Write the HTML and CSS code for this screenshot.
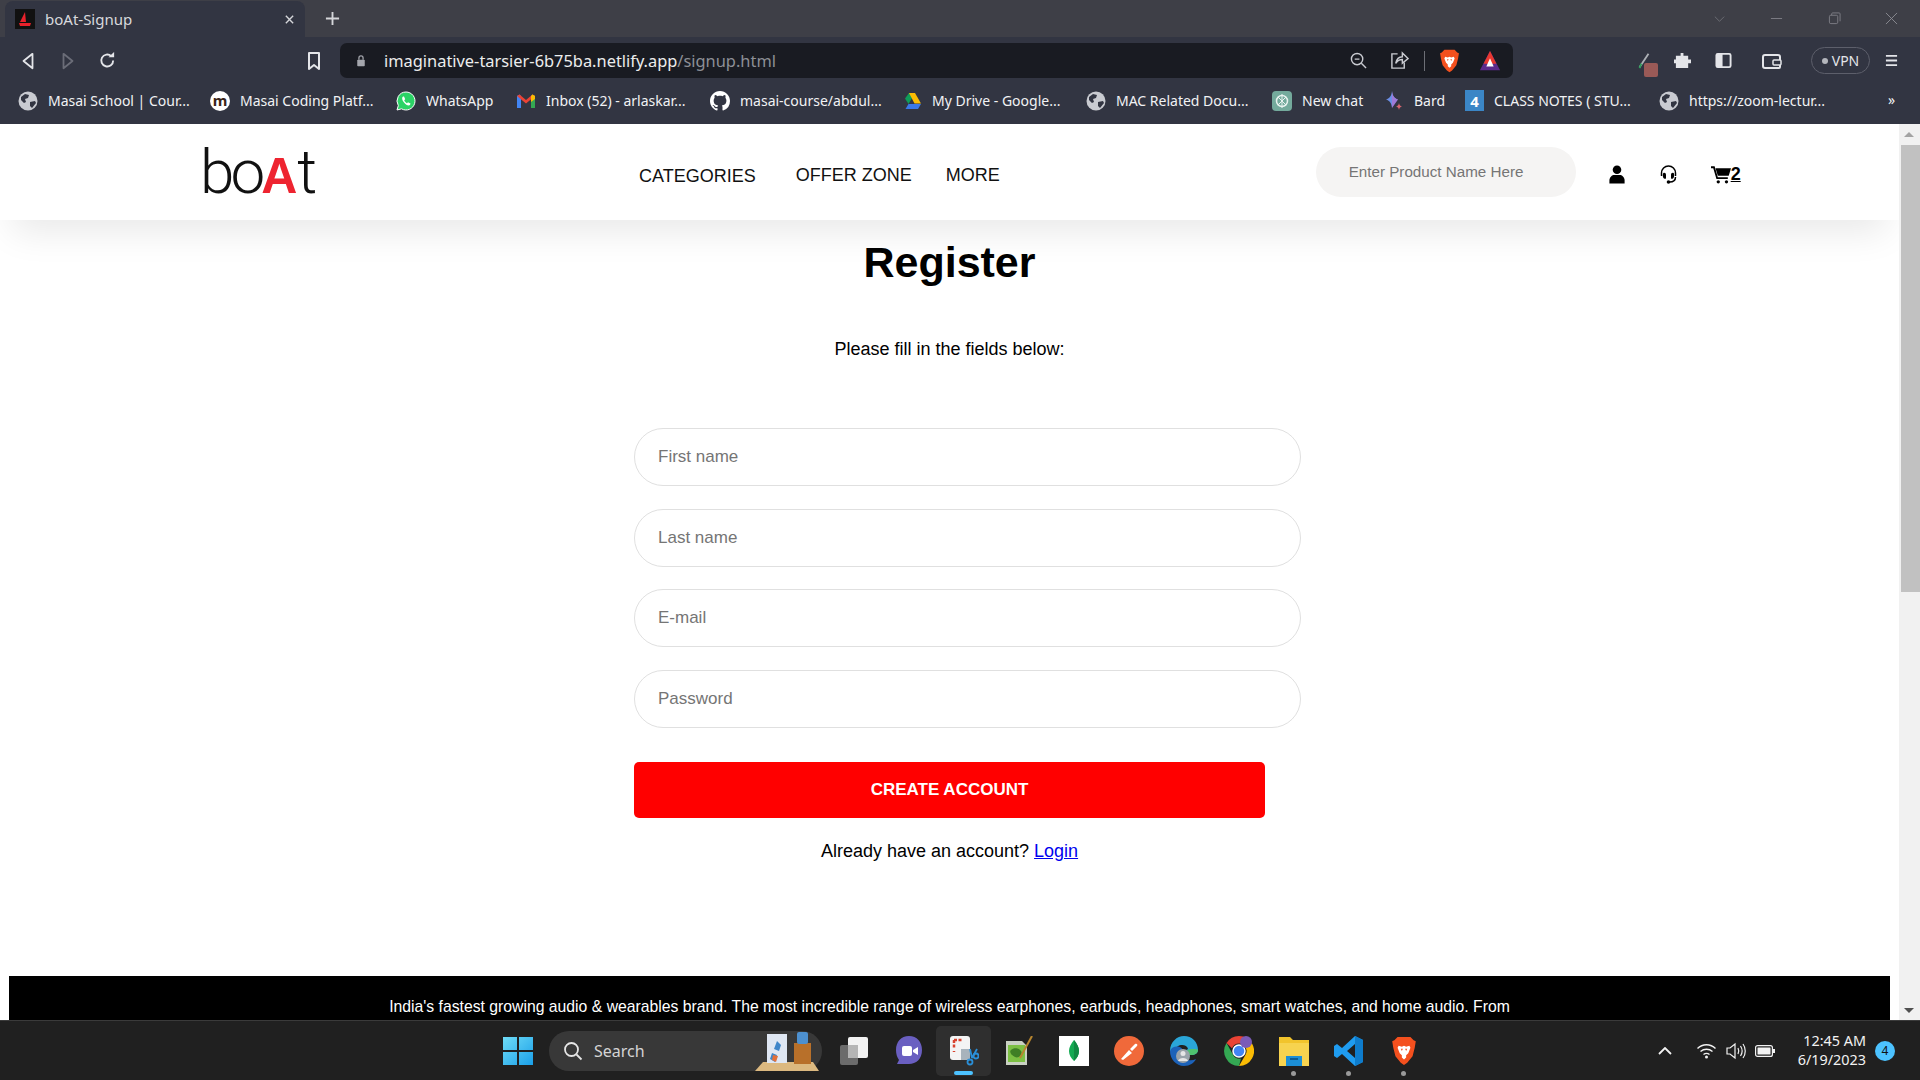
FILE: index.html
```html
<!DOCTYPE html>
<html lang="en">
<head>
  <meta charset="UTF-8">
  <meta name="viewport" content="width=device-width, initial-scale=1.0">
  <title>boAt-Signup</title>
  <link rel="stylesheet" href="styles.css">
</head>
<body>
  <svg class="sprites" width="0" height="0">
    <symbol id="globe" viewBox="0 0 20 20">
      <circle cx="10" cy="10" r="9.5" fill="#c9cbd1"/>
      <path d="M3 6l4-3 4 1-1 3-3 1 1 3-2 1-3-3zM12 11l5-1 1 2-4 5-2-2z" fill="#323542"/>
    </symbol>
    <symbol id="brave" viewBox="0 0 24 28">
      <path d="M6 1h12l3 3 2 1-1 6-2 8-5 6-3 2-3-2-5-6-2-8-1-6 2-1z" fill="#f4501e"/>
      <path d="M7 9l3 1 2-1 2 1 3-1 1 2-2 5-2 2v2l-2 2-2-2v-2l-2-2-2-5z" fill="#fff"/>
      <path d="M9 12h2l-1 2zM13 12h2l-1 2z" fill="#f4501e"/>
    </symbol>
  </svg>

  <!-- browser chrome -->
  <div class="tab-strip">
    <div class="tab">
      <svg class="tab-icon" viewBox="0 0 20 20"><rect width="20" height="20" fill="#111"/><path d="M10 3v10H5z" fill="#e8222b"/><path d="M10 3l1 10h-1z" fill="#e8222b"/><path d="M4 14h12l-1 3H5z" fill="#e8222b"/></svg>
      <span class="tab-title">boAt-Signup</span>
      <svg class="tab-close" viewBox="0 0 12 12"><path d="M2 2l8 8M10 2l-8 8" stroke="#d5d6da" stroke-width="1.5"/></svg>
    </div>
    <svg class="new-tab" viewBox="0 0 16 16"><path d="M8 1v14M1 8h14" stroke="#d5d6da" stroke-width="2"/></svg>
    <div class="win-controls">
      <svg viewBox="0 0 14 14"><path d="M2 5l5 5 5-5" fill="none" stroke="#6d6e76" stroke-width="1"/></svg>
      <svg viewBox="0 0 14 14"><path d="M1 7h12" stroke="#7f8087" stroke-width="1"/></svg>
      <svg viewBox="0 0 14 14"><rect x="1.5" y="3.5" width="9" height="9" rx="1.5" fill="none" stroke="#7f8087"/><path d="M4 3.5V2a1 1 0 011-1h7a1 1 0 011 1v8" fill="none" stroke="#7f8087"/></svg>
      <svg viewBox="0 0 14 14"><path d="M1 1l12 12M13 1L1 13" stroke="#8b8c93" stroke-width="1"/></svg>
    </div>
  </div>

  <div class="toolbar">
    <svg class="tool tool-back" viewBox="0 0 14 20"><path d="M12 2L2 10l10 8z" fill="none" stroke="#e4e5e9" stroke-width="2" stroke-linejoin="round"/></svg>
    <svg class="tool tool-forward" viewBox="0 0 14 20"><path d="M2 2l10 8-10 8z" fill="none" stroke="#6b6d78" stroke-width="2" stroke-linejoin="round"/></svg>
    <svg class="tool tool-reload" viewBox="0 0 18 18"><path d="M15 9a6.3 6.3 0 11-2-4.6" fill="none" stroke="#e4e5e9" stroke-width="2"/><path d="M10 5.500h6V0z" fill="#e4e5e9"/></svg>
    <svg class="tool tool-bookmark" viewBox="0 0 14 18"><path d="M2 1h10v16l-5-4-5 4z" fill="none" stroke="#e4e5e9" stroke-width="2" stroke-linejoin="round"/></svg>
    <div class="url-bar">
      <svg class="url-lock" viewBox="0 0 12 14"><path d="M3.500 6V4a2.500 2.500 0 015 0v2" fill="none" stroke="#a4a6ad" stroke-width="1.500"/><rect x="1.500" y="6" width="9" height="8" rx="1" fill="#a4a6ad"/></svg>
      <span class="url-text">imaginative-tarsier-6b75ba.netlify.app<span class="url-path">/signup.html</span></span>
      <svg class="url-zoom" viewBox="0 0 18 18"><circle cx="7.500" cy="7.500" r="6" fill="none" stroke="#c9cbd1" stroke-width="1.500"/><path d="M5 7.500h5M12 12l5 5" stroke="#c9cbd1" stroke-width="1.500"/></svg>
      <svg class="url-share" viewBox="0 0 20 20"><path d="M8 3H2v15h13v-6" fill="none" stroke="#c9cbd1" stroke-width="1.500"/><path d="M6 13c1-5 4-7 7-7V2l6 6-6 5V9c-3 0-5 1-7 4z" fill="none" stroke="#c9cbd1" stroke-width="1.500"/></svg>
      <span class="url-divider"></span>
      <svg class="url-brave"><use href="#brave"/></svg>
      <svg class="url-rewards" viewBox="0 0 24 24"><path d="M12 1l11 21H1z" fill="#5b2a8c"/><path d="M12 1l7 14H5z" fill="#e9382f"/><path d="M12 9l4 9H8z" fill="#fff"/></svg>
    </div>
    <svg class="tool tool-pen" viewBox="0 0 14 20"><path d="M12 2L2 17" stroke="#aeb1b6" stroke-width="2"/><path d="M4 13l-2 5" stroke="#2f9e5b" stroke-width="2"/></svg>
    <span class="pen-badge"></span>
    <svg class="tool tool-puzzle" viewBox="0 0 18 18"><path d="M7 1h3v3h5v4h3v4h-3v5H2v-5H0V8h2V4h5z" fill="#e4e5e9"/></svg>
    <svg class="tool tool-sidebar" viewBox="0 0 18 18"><rect x="1.500" y="2" width="15" height="14" rx="1.500" fill="none" stroke="#e4e5e9" stroke-width="2"/><rect x="2" y="2" width="6" height="14" fill="#e4e5e9"/></svg>
    <svg class="tool tool-wallet" viewBox="0 0 20 18"><path d="M3 3h13a2 2 0 012 2v10a1 1 0 01-1 1H3a2 2 0 01-2-2V5a2 2 0 012-2z" fill="none" stroke="#e4e5e9" stroke-width="2"/><rect x="11" y="8" width="8" height="5" rx="1" fill="#323542" stroke="#e4e5e9" stroke-width="1.500"/></svg>
    <div class="vpn-pill"><span class="vpn-dot"></span>VPN</div>
    <svg class="tool tool-menu" viewBox="0 0 14 14"><path d="M1 2h12M1 7h12M1 12h12" stroke="#e4e5e9" stroke-width="2"/></svg>
  </div>

  <div class="bookmarks">
    <div class="mark"><svg class="mark-icon"><use href="#globe"/></svg><span>Masai School | Cour...</span></div>
    <div class="mark"><span class="masai-icon">m</span><span>Masai Coding Platf...</span></div>
    <div class="mark">
      <svg class="mark-icon" viewBox="0 0 20 20"><path d="M10 1a9 9 0 00-7.700 13.600L1 19l4.500-1.200A9 9 0 1010 1z" fill="#2bd366" stroke="#fff" stroke-width="1"/><path d="M7 5.500c-1.500 1-1 3.500 1 6s4.500 3.500 6 2.500l.5-1.500-2.500-1.200-1 1c-1.200-.5-2.300-1.800-2.800-3l1-1L8 5.500z" fill="#fff"/></svg>
      <span>WhatsApp</span>
    </div>
    <div class="mark">
      <svg class="mark-icon" viewBox="0 0 20 20"><path d="M1 17V5l2.500-1.500L5 5v12z" fill="#4285f4"/><path d="M15 17V5l1.500-1.500L19 5v12z" fill="#34a853"/><path d="M1 5l2.500-1.500L10 9l6.500-5.500L19 5l-9 7.500z" fill="#ea4335"/><path d="M15 5l1.500-1.500L19 5v3l-4 3z" fill="#fbbc04"/></svg>
      <span>Inbox (52) - arlaskar...</span>
    </div>
    <div class="mark">
      <svg class="mark-icon" viewBox="0 0 16 16"><path fill="#fff" d="M8 0C3.580 0 0 3.580 0 8c0 3.540 2.290 6.530 5.470 7.590.4.070.55-.17.55-.38 0-.19-.01-.82-.01-1.490-2.010.37-2.530-.49-2.690-.94-.09-.23-.48-.94-.82-1.130-.28-.15-.68-.52-.01-.53.63-.01 1.080.58 1.230.82.72 1.210 1.870.87 2.330.66.07-.52.28-.87.51-1.070-1.780-.2-3.640-.89-3.640-3.950 0-.87.31-1.590.82-2.150-.08-.2-.36-1.020.08-2.120 0 0 .67-.21 2.200.82.64-.18 1.320-.27 2-.27.68 0 1.360.09 2 .27 1.530-1.040 2.200-.82 2.200-.82.44 1.100.16 1.920.08 2.120.51.56.82 1.270.82 2.150 0 3.070-1.870 3.750-3.650 3.950.29.25.54.73.54 1.480 0 1.070-.01 1.930-.01 2.200 0 .21.15.46.55.38A8.013 8.013 0 0016 8c0-4.420-3.580-8-8-8z"/></svg>
      <span>masai-course/abdul...</span>
    </div>
    <div class="mark">
      <svg class="mark-icon" viewBox="0 0 20 20"><path d="M7 2h6l-6.500 11-3.500-5.500z" fill="#0f9d58"/><path d="M13 2l6 10.500h-6.500L7 2z" fill="#fbbc04"/><path d="M6.500 13H19l-3 5H3.500z" fill="#3b78e7"/></svg>
      <span>My Drive - Google...</span>
    </div>
    <div class="mark"><svg class="mark-icon"><use href="#globe"/></svg><span>MAC Related Docu...</span></div>
    <div class="mark">
      <svg class="mark-icon" viewBox="0 0 20 20"><rect width="20" height="20" rx="4" fill="#74aa9c"/><circle cx="10" cy="10" r="5.500" fill="none" stroke="#e8f2ef" stroke-width="1.500"/><path d="M6 6l8 8M14 6l-8 8M10 3v14" stroke="#e8f2ef" stroke-width="1"/></svg>
      <span>New chat</span>
    </div>
    <div class="mark">
      <svg class="mark-icon" viewBox="0 0 20 20"><path d="M8 0c.6 5 2 7 6 8.500-4 1.500-5.400 3.500-6 8.500-.6-5-2-7-6-8.500C6 7 7.400 5 8 0z" fill="#6c8fe6"/><path d="M8 0c.6 5 2 7 6 8.500L8 17z" fill="#9f7ad8"/><path d="M15 12c.3 2 1 3 3 3.500-2 .5-2.700 1.500-3 3.500-.3-2-1-3-3-3.500 2-.5 2.700-1.500 3-3.500z" fill="#d96570"/></svg>
      <span>Bard</span>
    </div>
    <div class="mark"><span class="notes-icon">4</span><span>CLASS NOTES ( STU...</span></div>
    <div class="mark"><svg class="mark-icon"><use href="#globe"/></svg><span>https://zoom-lectur...</span></div>
    <div class="mark-more">»</div>
  </div>

  <!-- the page itself -->
  <div class="viewport">
    <div class="page">
      <header class="site-header">
        <div class="logo"><span class="logo-bo">bo</span><span class="logo-a">A</span><span>t</span></div>
        <nav class="site-nav">
          <a class="nav-categories">CATEGORIES</a>
          <a>OFFER ZONE</a>
          <a>MORE</a>
        </nav>
        <input class="search-box" type="text" placeholder="Enter Product Name Here">
        <svg class="icon-user" viewBox="0 0 16 20"><circle cx="8" cy="5" r="4.500"/><path d="M0 19.500v-3c0-4 3-6 5-6h6c2 0 5 2 5 6v3z"/></svg>
        <svg class="icon-headset" viewBox="0 0 18 20"><path d="M2 12V9a7 7 0 0114 0v3" fill="none" stroke="#000" stroke-width="1.500"/><path d="M4 9c1.500-.5 2.500.5 2.500 2v3c0 1-1 1-2 .5-1.500-1-1.500-5-.5-5.500zM14 9c-1.500-.5-2.500.5-2.500 2v3c0 1 1 1 2 .5 1.500-1 1.500-5 .5-5.500z"/><path d="M16 13c0 3-2 5-6 5" fill="none" stroke="#000" stroke-width="1.500"/><circle cx="9" cy="18" r="1.800"/></svg>
        <a class="cart-link">
          <svg class="icon-cart" viewBox="0 0 22 20"><path d="M0 1h4l3.500 12h11v2H6L2.500 3H0z"/><path d="M5 3h17l-2.500 8.500H7.500z"/><circle cx="8" cy="18" r="1.800"/><circle cx="17" cy="18" r="1.800"/></svg><span class="cart-count">2</span>
        </a>
      </header>

      <main class="register">
        <h1>Register</h1>
        <p class="register-hint">Please fill in the fields below:</p>
        <form class="register-form">
          <input type="text" placeholder="First name">
          <input type="text" placeholder="Last name">
          <input type="email" placeholder="E-mail">
          <input type="password" placeholder="Password">
          <button type="button">CREATE ACCOUNT</button>
        </form>
        <p class="register-login">Already have an account? <a href="#">Login</a></p>
      </main>

      <footer class="site-footer">
        <p>India's fastest growing audio &amp; wearables brand. The most incredible range of wireless earphones, earbuds, headphones, smart watches, and home audio. From</p>
      </footer>
    </div>
    <div class="scrollbar">
      <span class="scroll-up"></span>
      <span class="scroll-thumb"></span>
      <span class="scroll-down"></span>
    </div>
  </div>

  <!-- windows taskbar -->
  <div class="taskbar">
    <svg class="win-logo" viewBox="0 0 30 30">
      <defs><linearGradient id="winBlue" x1="0" y1="0" x2="1" y2="1"><stop offset="0" stop-color="#6fdcf7"/><stop offset="1" stop-color="#1a9fe8"/></linearGradient></defs>
      <path d="M0 1h14v13H0zM16 1h14v13H16zM0 16h14v13H0zM16 16h14v13H16z" fill="url(#winBlue)"/>
    </svg>
    <div class="task-search">
      <svg class="task-search-icon" viewBox="0 0 20 20"><circle cx="8.500" cy="8.500" r="6.500" fill="none" stroke="#e6e6e6" stroke-width="1.800"/><path d="M13.500 13.500l5 5" stroke="#e6e6e6" stroke-width="1.800"/></svg>
      <span>Search</span>
      <svg class="task-search-art" viewBox="0 0 64 40">
        <path d="M0 40l8-9h50l6 9z" fill="#dcb980"/>
        <rect x="12" y="3" width="20" height="29" fill="#dfe7f3"/>
        <path d="M22 10l4 4-2 6-5-2zM17 22l5 2-2 7-5-3z" fill="#3f86c9"/>
        <path d="M18 24l5 1-2 6-4-2z" fill="#e2703a"/>
        <rect x="39" y="12" width="17" height="21" fill="#b8702a"/>
        <rect x="42" y="1" width="11" height="12" rx="2" fill="#4d90cf"/>
      </svg>
    </div>
    <div class="task-apps">
      <div class="app">
        <svg viewBox="0 0 30 30"><rect x="1" y="9" width="18" height="20" rx="2" fill="#6b6b6b"/><rect x="9" y="1" width="20" height="21" rx="2" fill="#f2f2f2"/><rect x="9" y="9" width="10" height="13" fill="#b5b5b5"/></svg>
      </div>
      <div class="app">
        <svg viewBox="0 0 30 30"><path d="M15 0c8 0 13 6 13 14 0 9-6 14-13 14H3l2-4C3 21 2 18 2 14 2 6 7 0 15 0z" fill="#6a5fc1"/><rect x="8" y="10" width="10" height="10" rx="2" fill="#fff"/><path d="M19 14l5-3v8l-5-3z" fill="#fff"/></svg>
      </div>
      <div class="app app-active">
        <svg viewBox="0 0 30 30"><rect x="1" y="0" width="20" height="24" rx="3" fill="#f4f4f4"/><path d="M5 4h8M5 4v8M5 15v1" stroke="#d9432f" stroke-width="2.500" stroke-dasharray="3 1.500"/><rect x="12" y="13" width="9" height="11" fill="#a8b3bc"/><path d="M21 13l2 9M28 13l-5 9" stroke="#2a8fd8" stroke-width="1.800"/><circle cx="21" cy="26" r="2.500" fill="none" stroke="#2a8fd8" stroke-width="1.800"/><circle cx="27" cy="20" r="2.500" fill="none" stroke="#2a8fd8" stroke-width="1.800"/></svg>
      </div>
      <div class="app">
        <svg viewBox="0 0 30 30"><path d="M2 5h16l5 5v19H2z" fill="#c9d0c2"/><rect x="4" y="9" width="17" height="17" fill="#7cc043"/><path d="M7 14c3-3 8-2 10 1s-2 8-6 6-6-5-4-7z" fill="#3f7f25"/><path d="M28 0L16 22" stroke="#b8862f" stroke-width="2"/></svg>
      </div>
      <div class="app">
        <svg viewBox="0 0 30 30"><rect width="30" height="30" fill="#fff"/><path d="M15 4c3 4 5 7 5 11s-2 7-5 10c-3-3-5-6-5-10s2-7 5-11z" fill="#13aa52"/><path d="M15 4c3 4 5 7 5 11s-2 7-5 10z" fill="#0f8a43"/></svg>
      </div>
      <div class="app">
        <svg viewBox="0 0 30 30"><circle cx="15" cy="15" r="15" fill="#f0693a"/><path d="M7 23l8-9 3 3-9 7zM16 13l5-5c2-1 3 1 2 2l-5 5z" fill="#fff"/></svg>
      </div>
      <div class="app">
        <svg viewBox="0 0 30 30"><path d="M1 15C1 6 8 0 15 0c8 0 14 6 14 14 0 3-3 5-7 5h-7c0-4 2-5 4-6-1-5-11-6-14 2z" fill="#2aa6d8"/><path d="M29 14c0 3-3 5-7 5h-5c-1-3 2-6 5-6 4 0 7 0 7 1z" fill="#4fc26f"/><path d="M1 15c0 8 6 15 14 15 6 0 10-3 12-7-6 3-13 1-13-7C14 9 3 9 1 15z" fill="#1c62b9"/><circle cx="14" cy="20" r="7" fill="#9aa3aa"/><circle cx="14" cy="17.500" r="2.500" fill="#e6e6e6"/><path d="M9 25c1-4 9-4 10 0z" fill="#e6e6e6"/></svg>
      </div>
      <div class="app">
        <svg viewBox="0 0 30 30"><path d="M15 0a15 15 0 0113 7.500H15a7.500 7.500 0 00-7 4.800L2.500 7A15 15 0 0115 0z" fill="#ea4335"/><path d="M28 7.500A15 15 0 0115 30l6.500-11.300A7.500 7.500 0 0020 9.500z" fill="#fbbc04"/><path d="M15 30A15 15 0 012.500 7L9 18.700a7.500 7.500 0 008 3.900z" fill="#34a853"/><circle cx="15" cy="15" r="6" fill="#4285f4" stroke="#fff" stroke-width="1.500"/><circle cx="22" cy="6" r="6" fill="#7a5bb8"/></svg>
      </div>
      <div class="app app-open">
        <svg viewBox="0 0 30 30"><path d="M0 1h11l3 3h16v26H0z" fill="#f2c42c"/><path d="M0 7h30v23H0z" fill="#f7d34f"/><rect x="7" y="20" width="16" height="10" fill="#1c8fd6"/><rect x="11" y="22" width="8" height="2" fill="#0c5c94"/></svg>
      </div>
      <div class="app app-open">
        <svg viewBox="0 0 30 30"><path d="M21 0l8 4v22l-8 4-13-12-5 4-3-2v-10l3-2 5 4zM21 8l-8 7 8 7z" fill="#1f9cf0"/><path d="M21 0l8 4v22l-8 4z" fill="#0e7ccc"/></svg>
      </div>
      <div class="app app-open">
        <svg viewBox="0 0 24 28"><use href="#brave"/></svg>
      </div>
    </div>
    <div class="tray">
      <svg class="tray-chevron" viewBox="0 0 14 8"><path d="M1 7l6-6 6 6" fill="none" stroke="#f2f2f2" stroke-width="1.800"/></svg>
      <svg class="tray-wifi" viewBox="0 0 20 16"><path d="M1 5.500c5-5 13-5 18 0M4 8.500c3.500-3 8.500-3 12 0M7 11.500c2-1.500 4-1.500 6 0" fill="none" stroke="#f2f2f2" stroke-width="1.400"/><circle cx="10" cy="14" r="1.500" fill="#f2f2f2"/></svg>
      <svg class="tray-sound" viewBox="0 0 20 18"><path d="M1 6h3l5-4v14l-5-4H1z" fill="none" stroke="#f2f2f2" stroke-width="1.200"/><path d="M12 6c1 2 1 4 0 6M14.500 4c2 3 2 7 0 10M17 2c3 4 3 10 0 14" fill="none" stroke="#f2f2f2" stroke-width="1.200"/></svg>
      <svg class="tray-battery" viewBox="0 0 20 12"><rect x=".6" y=".6" width="16.800" height="10.800" rx="2" fill="none" stroke="#f2f2f2" stroke-width="1.200"/><rect x="2.500" y="2.500" width="13" height="7" rx=".5" fill="#f2f2f2"/><rect x="18" y="4" width="2" height="4" fill="#f2f2f2"/></svg>
      <div class="tray-clock"><span>12:45 AM</span><span>6/19/2023</span></div>
      <span class="tray-badge">4</span>
    </div>
  </div>
</body>
</html>
```

FILE: styles.css
```css
* {
  box-sizing: border-box;
}

html, body {
  height: 100%;
}

body {
  margin: 0;
  display: flex;
  flex-direction: column;
  overflow: hidden;
  font-family: 'Liberation Sans', Arial, sans-serif;
  background: #fff;
}

.sprites {
  position: absolute;
}

svg {
  display: block;
  flex-shrink: 0;
}

/* browser chrome */
.tab-strip {
  height: 37px;
  display: flex;
  align-items: flex-end;
  padding-left: 5px;
  background: #3e3f47;
  font-family: 'Noto Sans', sans-serif;
}

.tab {
  width: 300px;
  height: 36px;
  display: flex;
  align-items: center;
  padding: 0 10px;
  background: #323542;
  border-radius: 8px 8px 0 0;
}

.tab-icon {
  width: 20px;
  height: 20px;
}

.tab-title {
  margin-left: 10px;
  font-size: 15px;
  color: #d8d9dd;
}

.tab-close {
  width: 11px;
  height: 11px;
  margin-left: auto;
}

.new-tab {
  width: 15px;
  height: 15px;
  margin: 0 0 11px 20px;
}

.win-controls {
  margin-left: auto;
  align-self: center;
  display: flex;
  gap: 44.5px;
  padding-right: 22px;
}

.win-controls svg {
  width: 13px;
  height: 13px;
}

.toolbar {
  height: 47px;
  display: flex;
  align-items: center;
  background: #323542;
  font-family: 'Noto Sans', sans-serif;
}

.tool {
  height: 18px;
  width: 14px;
}

.tool-back { margin-left: 21px; }
.tool-forward { margin-left: 26px; }
.tool-reload { margin-left: 24px; width: 17px; height: 17px; }
.tool-bookmark { margin-left: 191px; }

.url-bar {
  width: 1173px;
  height: 35px;
  margin-left: 19px;
  display: flex;
  align-items: center;
  padding-left: 16px;
  background: #191b22;
  border-radius: 7px;
}

.url-lock {
  width: 10px;
  height: 13px;
}

.url-text {
  margin-left: 18px;
  font-size: 16.4px;
  color: #eceded;
  white-space: nowrap;
}

.url-path {
  color: #8d8f96;
}

.url-zoom { width: 17px; height: 17px; margin-left: auto; }
.url-share { width: 19px; height: 19px; margin-left: 23px; }
.url-divider { width: 1px; height: 20px; margin-left: 15px; background: #6d6f76; }
.url-brave { width: 21px; height: 24px; margin-left: 14px; }
.url-rewards { width: 22px; height: 22px; margin: 0 12px 0 19px; }

.tool-pen { margin-left: 124px; }

.pen-badge {
  width: 14px;
  height: 14px;
  margin: 19px 0 0 -7px;
  background: #9a5a57;
  border-radius: 2px;
}

.tool-puzzle { width: 17px; height: 17px; margin-left: 16px; }
.tool-sidebar { width: 17px; height: 17px; margin-left: 24px; }
.tool-wallet { width: 20px; height: 18px; margin-left: 30px; }

.vpn-pill {
  width: 59px;
  height: 27px;
  margin-left: 29px;
  display: flex;
  align-items: center;
  justify-content: center;
  gap: 4px;
  border: 1.500px solid #5d5f6b;
  border-radius: 14px;
  font-size: 14px;
  color: #e4e5e9;
}

.vpn-dot {
  width: 6px;
  height: 6px;
  border-radius: 50%;
  background: #b4b6bc;
}

.tool-menu { width: 13px; height: 13px; margin-left: 15px; }

.bookmarks {
  height: 40px;
  display: grid;
  grid-template-columns: 192px 186px 120px 194px 192px 184px 186px 112px 81px 194px 229px 10px;
  align-items: center;
  padding: 0 0 7px 18px;
  background: #323542;
  font-family: 'Noto Sans', sans-serif;
  font-size: 14px;
  color: #f1f2f4;
}

.mark {
  display: flex;
  align-items: center;
  gap: 10px;
  white-space: nowrap;
}

.mark-icon {
  width: 20px;
  height: 20px;
}

.masai-icon {
  width: 20px;
  height: 20px;
  display: flex;
  align-items: center;
  justify-content: center;
  border-radius: 50%;
  background: #fff;
  color: #3a2418;
  font-weight: 700;
  font-size: 15px;
  line-height: 1;
}

.notes-icon {
  width: 19px;
  height: 21px;
  display: flex;
  align-items: center;
  justify-content: center;
  background: #3b86c6;
  color: #fff;
  font-weight: 700;
  font-size: 15px;
}

.mark-more {
  font-size: 14px;
  margin-top: -2px;
}

/* page */
.viewport {
  flex: 1;
  min-height: 0;
  display: flex;
}

.page {
  width: 1899px;
  padding: 0 9px;
  overflow: hidden;
}

.site-header {
  height: 96px;
  margin: 0 -9px;
  display: flex;
  align-items: center;
  padding-left: 200px;
  background: #fff;
  box-shadow: 0 24px 36px -12px rgba(0, 0, 0, 0.09);
  position: relative;
}

.logo {
  width: 117px;
  height: 62px;
  display: flex;
  align-items: baseline;
  font-family: Roboto, sans-serif;
  font-weight: 300;
  font-size: 62px;
  line-height: 62px;
  color: #111;
}

.logo-bo {
  letter-spacing: -4px;
}

.logo-a {
  font-family: 'Liberation Sans', sans-serif;
  font-weight: 700;
  font-size: 50px;
  color: #ee2430;
}

.site-nav {
  margin-left: 322px;
  display: flex;
  align-items: center;
  font-size: 18px;
  color: #111;
  margin-top: 7px;
}

.site-nav a:nth-child(2) { margin-left: 40px; }
.site-nav a:nth-child(3) { margin-left: 34px; }

.nav-categories {
  padding-top: 1px;
}

.search-box {
  width: 260px;
  height: 50px;
  margin-left: 316px;
  padding: 0 20px 2px 33px;
  border: none;
  border-radius: 25px;
  background: #f5f4f3;
  font-family: inherit;
  font-size: 15.2px;
}

.icon-user {
  width: 16px;
  height: 19px;
  margin: 4px 0 0 33px;
}

.icon-headset {
  width: 19px;
  height: 20px;
  margin: 4px 0 0 34px;
}

.cart-link {
  display: flex;
  align-items: center;
  margin: 4px 0 0 33px;
  color: #000;
}

.icon-cart {
  width: 20px;
  height: 19px;
}

.cart-count {
  font-size: 18px;
  font-weight: 700;
  text-decoration: underline;
}

.register {
  width: 631px;
  margin: 0 auto;
  text-align: center;
}

.register h1 {
  margin: 0;
  padding-top: 17px;
  font-size: 43px;
  line-height: 50px;
  color: #000;
}

.register-hint {
  margin: 52px 0 0;
  font-size: 18px;
  line-height: 20px;
}

.register-form {
  margin-top: 69px;
  display: flex;
  flex-direction: column;
  align-items: flex-start;
}

.register-form input {
  box-sizing: content-box;
  width: 100%;
  height: 56px;
  margin-bottom: 22.67px;
  padding: 0 11px 0 23px;
  border: 1px solid #e0e0e0;
  border-radius: 29px;
  font-family: inherit;
  font-size: 17px;
}

.register-form button {
  width: 100%;
  height: 56px;
  margin-top: 11.33px;
  border: none;
  border-radius: 5px;
  background: #f00;
  color: #fff;
  font-family: inherit;
  font-size: 17px;
  font-weight: 700;
}

.register-login {
  margin: 22px 0 0;
  font-size: 18px;
  line-height: 22px;
}

.register-login a {
  color: #0000ee;
}

.site-footer {
  margin-top: 114px;
  height: 60px;
  padding-top: 22px;
  background: #000;
  color: #fff;
  text-align: center;
  font-size: 15.75px;
}

.site-footer p {
  margin: 0;
}

.scrollbar {
  width: 21px;
  background: #f1f1f1;
  position: relative;
}

.scroll-up, .scroll-down {
  position: absolute;
  left: 5px;
  border-left: 5px solid transparent;
  border-right: 5px solid transparent;
}

.scroll-up {
  top: 8px;
  border-bottom: 5px solid #a3a3a3;
}

.scroll-down {
  bottom: 7px;
  border-top: 5px solid #505050;
}

.scroll-thumb {
  position: absolute;
  top: 21px;
  left: 2px;
  width: 19px;
  height: 447px;
  background: #c1c1c1;
}

/* taskbar */
.taskbar {
  height: 60px;
  display: flex;
  align-items: center;
  position: relative;
  background: #202020;
  border-top: 1px solid #3a3a3a;
  font-family: 'Noto Sans', sans-serif;
}

.win-logo {
  width: 30px;
  height: 30px;
  margin-left: 503px;
}

.task-search {
  width: 273px;
  height: 40px;
  margin-left: 16px;
  display: flex;
  align-items: center;
  padding-left: 14px;
  position: relative;
  background: #383838;
  border-radius: 20px;
  color: #d4d4d4;
  font-size: 16px;
}

.task-search-icon {
  width: 20px;
  height: 20px;
  margin-right: 11px;
}

.task-search-art {
  position: absolute;
  right: 2px;
  bottom: 0;
  width: 66px;
  height: 40px;
}

.task-apps {
  display: flex;
  margin-left: 4px;
}

.app {
  width: 55px;
  height: 50px;
  display: flex;
  align-items: center;
  justify-content: center;
  position: relative;
  border-radius: 5px;
}

.app svg {
  width: 30px;
  height: 30px;
}

.app-active {
  background: #2f2f2f;
}

.app-active::after {
  content: '';
  position: absolute;
  left: 18px;
  bottom: 1px;
  width: 19px;
  height: 4px;
  border-radius: 2px;
  background: #4cc2ff;
}

.app-open::after {
  content: '';
  position: absolute;
  left: 25px;
  bottom: 0;
  width: 5px;
  height: 5px;
  border-radius: 50%;
  background: #9a9a9a;
}

.tray {
  margin-left: auto;
  display: flex;
  align-items: center;
  padding-right: 25px;
  color: #f2f2f2;
}

.tray-chevron { width: 14px; height: 8px; }
.tray-wifi { width: 21px; height: 16px; margin-left: 24px; }
.tray-sound { width: 20px; height: 18px; margin-left: 9px; }
.tray-battery { width: 20px; height: 12px; margin-left: 9px; }

.tray-clock {
  width: 91px;
  margin-top: -2px;
  display: flex;
  flex-direction: column;
  align-items: flex-end;
  font-size: 14.4px;
  line-height: 19px;
}

.tray-badge {
  width: 20px;
  height: 20px;
  margin-left: 9px;
  display: flex;
  align-items: center;
  justify-content: center;
  border-radius: 50%;
  background: #4cc2ff;
  color: #111;
  font-size: 12px;
}
```
